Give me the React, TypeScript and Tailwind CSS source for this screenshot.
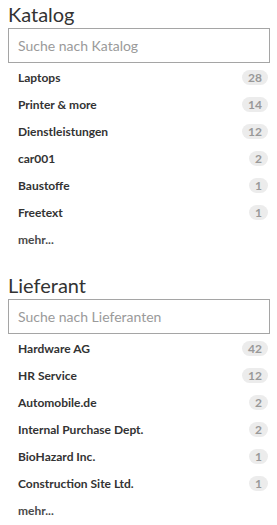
import React from 'react';

type Facet = { label: string; count: number };

const katalog: Facet[] = [
  { label: 'Laptops', count: 28 },
  { label: 'Printer & more', count: 14 },
  { label: 'Dienstleistungen', count: 12 },
  { label: 'car001', count: 2 },
  { label: 'Baustoffe', count: 1 },
  { label: 'Freetext', count: 1 },
];

const lieferant: Facet[] = [
  { label: 'Hardware AG', count: 42 },
  { label: 'HR Service', count: 12 },
  { label: 'Automobile.de', count: 2 },
  { label: 'Internal Purchase Dept.', count: 2 },
  { label: 'BioHazard Inc.', count: 1 },
  { label: 'Construction Site Ltd.', count: 1 },
];

function FacetGroup({ title, placeholder, items }: { title: string; placeholder: string; items: Facet[] }) {
  return (
    <div className="pt-[4px]">
      <h3 className="text-[20px] leading-[20px] text-[#333] mb-[4px]">{title}</h3>
      <input
        type="text"
        placeholder={placeholder}
        className="block w-full h-[35px] border border-[#a5a5a5] bg-white pl-[9px] text-[14px] text-[#333] placeholder:text-[#9a9a9a] outline-none"
      />
      <ul className="mt-[1px]">
        {items.map((item) => (
          <li key={item.label} className="flex h-[27px] items-center justify-between pl-[10px] pr-[2px]">
            <span className="text-[12px] font-bold text-[#333]">{item.label}</span>
            <span className="rounded-full bg-[#ececec] px-[6px] text-[12px] leading-[15px] font-bold text-[#999]">
              {item.count}
            </span>
          </li>
        ))}
        <li className="flex h-[27px] items-center pl-[10px]">
          <a href="#" className="text-[12px] font-bold text-[#4a4a4a]">mehr...</a>
        </li>
      </ul>
    </div>
  );
}

export default function App() {
  return (
    <div className="min-h-screen bg-white pl-2 pr-[7px] font-['Lato',sans-serif]">
      <FacetGroup title="Katalog" placeholder="Suche nach Katalog" items={katalog} />
      <div className="mt-[18px]">
        <FacetGroup title="Lieferant" placeholder="Suche nach Lieferanten" items={lieferant} />
      </div>
    </div>
  );
}
